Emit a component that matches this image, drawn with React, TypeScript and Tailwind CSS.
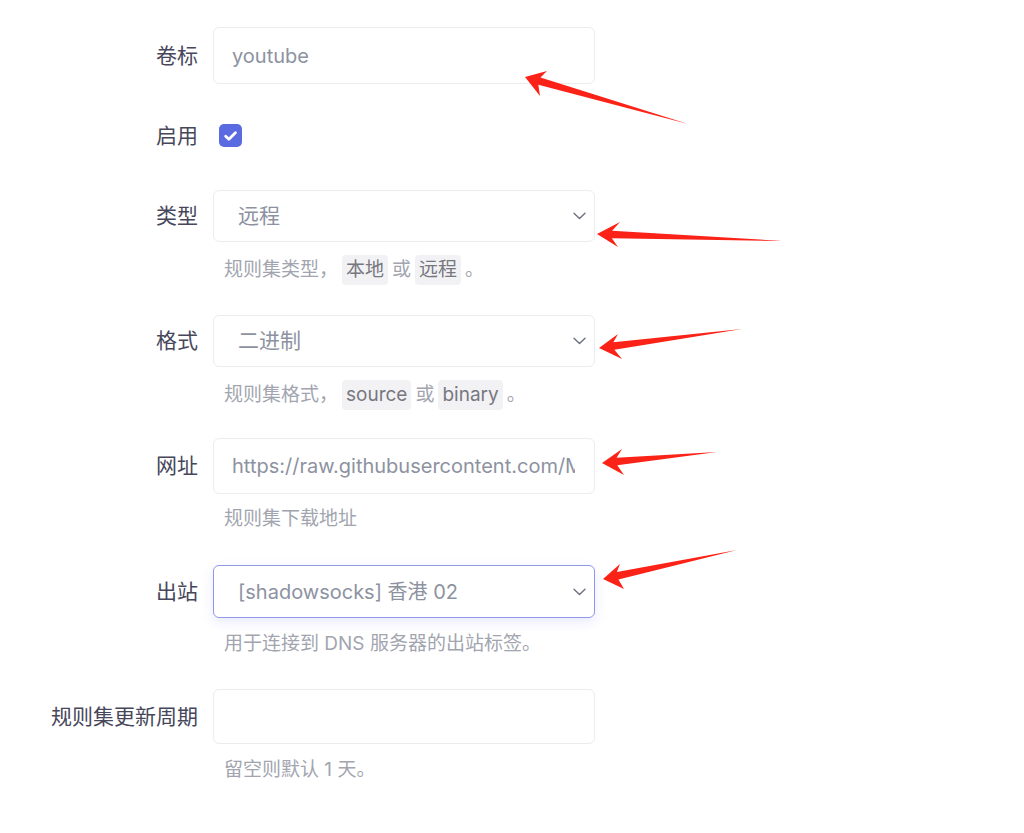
import type { ReactNode } from 'react';

type Pt = [number, number];

// arrow polygon from tip, tail and the two barb points
function arrowPoints(tip: Pt, tail: Pt, barbA: Pt, barbB: Pt) {
  const dx = tail[0] - tip[0];
  const dy = tail[1] - tip[1];
  const len = Math.hypot(dx, dy);
  const ux = dx / len;
  const uy = dy / len;
  const nx = -uy;
  const ny = ux;
  const neck = 15;
  const w = 3.8;
  const n1: Pt = [tip[0] + ux * neck + nx * w, tip[1] + uy * neck + ny * w];
  const n2: Pt = [tip[0] + ux * neck - nx * w, tip[1] + uy * neck - ny * w];
  const sideA = (barbA[0] - tip[0]) * nx + (barbA[1] - tip[1]) * ny;
  const [bp, bm] = sideA > 0 ? [barbA, barbB] : [barbB, barbA];
  const pts: Pt[] = [tip, bp, n1, tail, n2, bm];
  return pts.map((p) => p.join(',')).join(' ');
}

const arrows: Array<{ tip: Pt; tail: Pt; a: Pt; b: Pt }> = [
  { tip: [525, 77], tail: [688, 124], a: [547, 71], b: [540, 96] },
  { tip: [597, 234], tail: [783, 241], a: [620, 222], b: [618, 247] },
  { tip: [599, 348], tail: [742, 329], a: [618, 334], b: [622, 359] },
  { tip: [602, 463], tail: [717, 452], a: [622, 449], b: [624, 475] },
  { tip: [603, 579], tail: [737, 550], a: [620, 564], b: [624, 589] },
];

function Chevron() {
  return (
    <svg width="13" height="8" viewBox="0 0 13 8" fill="none" className="shrink-0">
      <path d="M1 1.2l5.5 5.2 5.5-5.2" stroke="#6b7080" strokeWidth="1.4" strokeLinecap="round" strokeLinejoin="round" />
    </svg>
  );
}

function Label({ children }: { children: ReactNode }) {
  return <div className="text-right text-[21px] text-[#47475b] whitespace-nowrap">{children}</div>;
}

function Helper({ children, mt }: { children: ReactNode; mt: string }) {
  return (
    <div className={`${mt} grid grid-cols-[198px_382px] gap-x-[15px]`}>
      <div />
      <div className="pl-[11px] h-[26px] flex items-center text-[19px] text-[#a2a5af] whitespace-nowrap">{children}</div>
    </div>
  );
}

function Code({ children }: { children: ReactNode }) {
  return <span className="mx-[4px] px-[4px] py-[1px] rounded bg-[#f2f2f4] text-[#77777f]">{children}</span>;
}

export default function App() {
  return (
    <div className="relative w-[1024px] h-[833px] bg-white overflow-hidden" style={{ fontFamily: 'Inter, "Noto Sans CJK SC", sans-serif' }}>
      <div className="pt-[27px]">
        {/* 卷标 */}
        <div className="grid grid-cols-[198px_382px] gap-x-[15px] items-center">
          <Label>卷标</Label>
          <div className="h-[57px] rounded-md border border-[#ebecf0] flex items-center pl-[18px] text-[20px] text-[#8d92a1]">youtube</div>
        </div>

        {/* 启用 */}
        <div className="mt-[36px] grid grid-cols-[198px_382px] gap-x-[15px] items-center h-[24px]">
          <Label>启用</Label>
          <div className="pl-[6px] flex items-center">
            <div className="w-[23px] h-[23px] rounded-[5px] bg-[#5a6ae0] flex items-center justify-center">
              <svg width="13" height="10" viewBox="0 0 13 10" fill="none">
                <path d="M1.7 5.2l3.2 3 6.5-6.5" stroke="white" strokeWidth="2.8" strokeLinecap="round" strokeLinejoin="round" />
              </svg>
            </div>
          </div>
        </div>

        {/* 类型 */}
        <div className="mt-[46px] grid grid-cols-[198px_382px] gap-x-[15px] items-center">
          <Label>类型</Label>
          <div className="h-[52px] rounded-md border border-[#ebecf0] flex items-center justify-between pl-[24px] pr-[8px] text-[21px] text-[#8d92a1]">
            <span>远程</span>
            <Chevron />
          </div>
        </div>
        <Helper mt="mt-[15px]">
          规则集类型，<Code>本地</Code>或<Code>远程</Code>。
        </Helper>

        {/* 格式 */}
        <div className="mt-[32px] grid grid-cols-[198px_382px] gap-x-[15px] items-center">
          <Label>格式</Label>
          <div className="h-[52px] rounded-md border border-[#ebecf0] flex items-center justify-between pl-[24px] pr-[8px] text-[21px] text-[#8d92a1]">
            <span>二进制</span>
            <Chevron />
          </div>
        </div>
        <Helper mt="mt-[15px]">
          规则集格式，<Code>source</Code>或<Code>binary</Code>。
        </Helper>

        {/* 网址 */}
        <div className="mt-[30px] grid grid-cols-[198px_382px] gap-x-[15px] items-center">
          <Label>网址</Label>
          <div className="h-[56px] rounded-md border border-[#ebecf0] flex items-center pl-[18px] pr-[19px] text-[20px] text-[#8d92a1]">
            <div className="overflow-hidden whitespace-nowrap w-full">https://raw.githubusercontent.com/MetaCubeX/meta-rules-dat/sing/geo/geosite/youtube.srs</div>
          </div>
        </div>
        <Helper mt="mt-[12px]">规则集下载地址</Helper>

        {/* 出站 */}
        <div className="mt-[33px] grid grid-cols-[198px_382px] gap-x-[15px] items-center">
          <Label>出站</Label>
          <div className="h-[53px] rounded-md border border-[#8f97e6] shadow-[0_4px_12px_rgba(99,102,241,0.14)] flex items-center justify-between pl-[24px] pr-[8px] text-[20px] text-[#8d92a1]">
            <span>[shadowsocks] 香港 02</span>
            <Chevron />
          </div>
        </div>
        <Helper mt="mt-[13px]">用于连接到 DNS 服务器的出站标签。</Helper>

        {/* 规则集更新周期 */}
        <div className="mt-[32px] grid grid-cols-[198px_382px] gap-x-[15px] items-center">
          <Label>规则集更新周期</Label>
          <div className="h-[55px] rounded-md border border-[#ebecf0]" />
        </div>
        <Helper mt="mt-[13px]">留空则默认 1 天。</Helper>
      </div>

      {/* annotation arrows */}
      <svg className="absolute inset-0 pointer-events-none" width="1024" height="833">
        {arrows.map((a, i) => (
          <polygon key={i} points={arrowPoints(a.tip, a.tail, a.a, a.b)} fill="#fb2318" />
        ))}
      </svg>
    </div>
  );
}
